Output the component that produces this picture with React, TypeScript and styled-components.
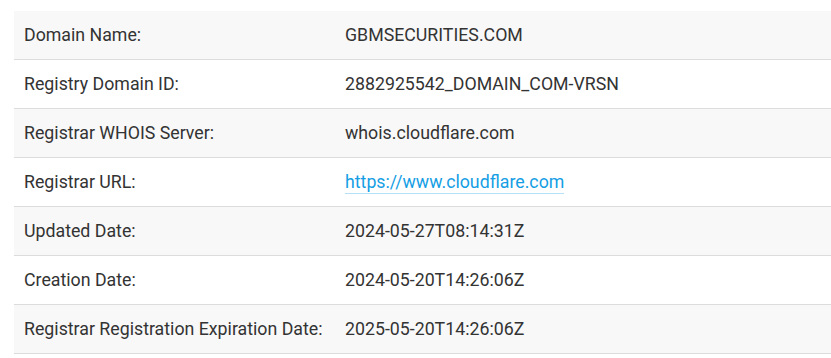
import styled, { createGlobalStyle } from "styled-components";

const GlobalStyle = createGlobalStyle`
	body {
		margin: 0;
		background: #fff;
		font-family: Roboto, "Liberation Sans", sans-serif;
	}
`;

const Page = styled.div`
	padding: 11px 0 0 14px;
`;

const Table = styled.table`
	width: 817px;
	border-collapse: collapse;
	font-size: 17.75px;
	color: #333;
`;

const Row = styled.tr<{ $shaded: boolean }>`
	background: ${(p) => (p.$shaded ? "#f8f8f8" : "#fff")};
	border-bottom: 1px solid #dcdcdc;
`;

const Label = styled.td`
	width: 321px;
	height: 48px;
	padding: 0 0 0 10px;
	vertical-align: middle;
	white-space: nowrap;
`;

const Value = styled.td`
	padding: 0;
	vertical-align: middle;
`;

const Link = styled.a`
	color: #159ee4;
	text-decoration: none;
	border-bottom: 1px solid #b5e0f5;
	padding-bottom: 1px;
`;

const rows: { label: string; value: string; href?: boolean }[] = [
	{ label: "Domain Name:", value: "GBMSECURITIES.COM" },
	{ label: "Registry Domain ID:", value: "2882925542_DOMAIN_COM-VRSN" },
	{ label: "Registrar WHOIS Server:", value: "whois.cloudflare.com" },
	{ label: "Registrar URL:", value: "https://www.cloudflare.com", href: true },
	{ label: "Updated Date:", value: "2024-05-27T08:14:31Z" },
	{ label: "Creation Date:", value: "2024-05-20T14:26:06Z" },
	{ label: "Registrar Registration Expiration Date:", value: "2025-05-20T14:26:06Z" },
];

export default function App() {
	return (
		<Page>
			<GlobalStyle />
			<Table>
				<tbody>
					{rows.map((row, i) => (
						<Row key={row.label} $shaded={i % 2 === 0}>
							<Label>{row.label}</Label>
							<Value>{row.href ? <Link href={row.value}>{row.value}</Link> : row.value}</Value>
						</Row>
					))}
				</tbody>
			</Table>
		</Page>
	);
}
